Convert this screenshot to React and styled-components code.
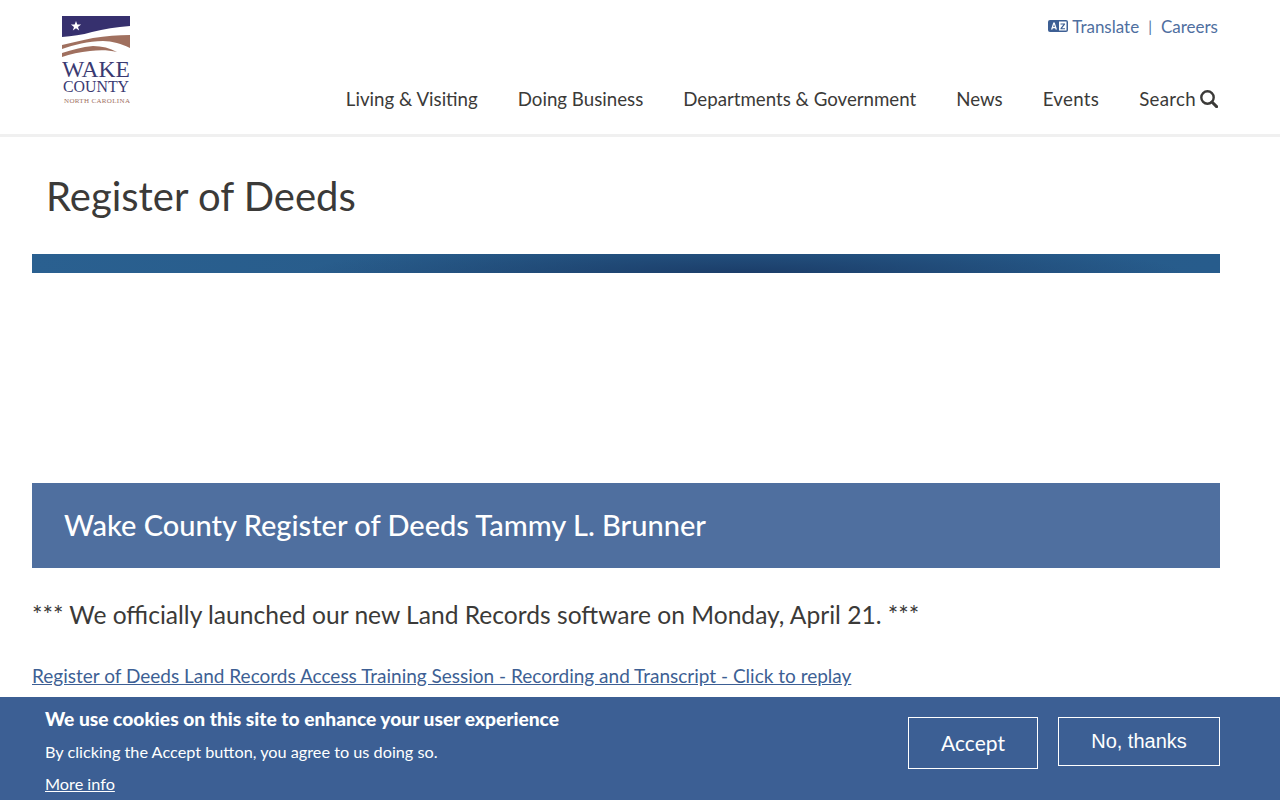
import React from 'react';
import styled, { createGlobalStyle } from 'styled-components';

const GlobalStyle = createGlobalStyle`
	html, body {
		margin: 0;
		padding: 0;
		background: #fff;
		font-family: "Lato", "Noto Sans", sans-serif;
		color: #3b3a38;
	}
`;

const Header = styled.header`
	height: 134px;
	border-bottom: 3px solid #f0f0f0;
	display: flex;
	justify-content: space-between;
	padding: 0 62px;
`;

const LogoLink = styled.a`
	display: block;
	width: 68px;
	height: 88px;
	margin-top: 16px;
`;

const HeaderRight = styled.div`
	display: flex;
	flex-direction: column;
	align-items: flex-end;
`;

const TopLinks = styled.div`
	display: flex;
	align-items: center;
	height: 20px;
	margin-top: 16px;
	font-size: 17px;
	color: #4f6f9f;
`;

const TopLink = styled.a`
	display: flex;
	align-items: center;
	gap: 4px;
	color: #4f6f9f;
	text-decoration: none;
`;

const Separator = styled.span`
	margin: 0 9px;
	font-size: 15px;
`;

const Nav = styled.nav`
	display: flex;
	gap: 40px;
	margin-top: 52px;
	font-size: 18.7px;
	line-height: 22px;
`;

const NavItem = styled.a`
	display: flex;
	align-items: center;
	gap: 4px;
	color: #3b3a38;
	letter-spacing: ${props => props.$track || 0}px;
`;

const Title = styled.h1`
	box-sizing: content-box;
	margin: 0;
	padding: 36px 0 0 46px;
	height: 81px;
	font-size: 40px;
	line-height: 46px;
	font-weight: 400;
	color: #3b3a38;
`;

const Main = styled.main`
	width: 1188px;
	margin-left: 32px;
`;

const Banner = styled.div`
	height: 19px;
	background:
		radial-gradient(ellipse 440px 32px at 60% 100%, #1b3d69 0%, rgba(27, 61, 105, 0) 100%),
		linear-gradient(90deg, #2a6090 0%, #275a88 50%, #275c8c 100%);
`;

const Spacer = styled.div`
	height: 210px;
`;

const Heading = styled.h2`
	margin: 0;
	height: 85px;
	padding: 0 0 2px 32px;
	box-sizing: border-box;
	display: flex;
	align-items: center;
	background: #4f6f9f;
	color: #fff;
	font-size: 29px;
	font-weight: 500;
`;

const Notice = styled.p`
	margin: 33px 0 0;
	font-size: 24.6px;
	line-height: 28px;
	color: #3b3a38;
`;

const TrainingLink = styled.a`
	display: block;
	margin-top: 36px;
	font-size: 19px;
	line-height: 22px;
	color: #3d5f94;
	text-decoration: underline;
`;

const CookieBar = styled.div`
	position: fixed;
	left: 0;
	right: 0;
	bottom: 0;
	height: 103px;
	background: #3c5f94;
	color: #fff;
	display: flex;
	justify-content: space-between;
	padding: 0 60px 0 45px;
`;

const CookieText = styled.div`
	padding-top: 11px;
`;

const CookieTitle = styled.div`
	font-size: 19.2px;
	line-height: 22px;
	font-weight: 900;
`;

const CookieCopy = styled.div`
	margin-top: 12px;
	font-size: 16.25px;
	line-height: 20px;
`;

const MoreInfo = styled.a`
	display: inline-block;
	margin-top: 12px;
	font-size: 16.25px;
	line-height: 20px;
	color: #fff;
	text-decoration: underline;
`;

const CookieActions = styled.div`
	display: flex;
	align-items: flex-start;
	gap: 20px;
	padding-top: 20px;
`;

const CookieButton = styled.button`
	box-sizing: border-box;
	background: transparent;
	border: 1px solid #fff;
	color: #fff;
	cursor: pointer;
	width: ${props => props.$width}px;
	height: ${props => props.$height}px;
	font-family: ${props => props.$arial ? '"Liberation Sans", Arial, sans-serif' : '"Lato", sans-serif'};
	font-size: ${props => props.$arial ? 20 : 21}px;
	padding: 0 0 ${props => props.$arial ? 0 : 2}px;
`;

const Logo = () => (
	<svg width="68" height="88" viewBox="0 0 68 88">
		<path d="M0 0H68V10C54 11 42 13 30 16C20 19 10 20 0 21Z" fill="#36306e" />
		<path d="M14 5l1.3 3.6h3.8l-3.1 2.3 1.2 3.6-3.2-2.2-3.2 2.2 1.2-3.6-3.1-2.3h3.8z" fill="#fff" />
		<path d="M0 29C10 27 20 24 31 22C44 20 56 19 68 19V32C60 28 50 25 41 25C26 25 12 29 0 33Z" fill="#a0705f" />
		<path d="M0 37C10 34 20 31 31 30C40 30 48 32 55 36C46 34 38 34 28 35C18 36 8 38 0 41Z" fill="#a0705f" />
		<text x="34" y="61" textAnchor="middle" fontFamily="Liberation Serif, serif" fontSize="23" fill="#3a3a72" textLength="68" lengthAdjust="spacingAndGlyphs">WAKE</text>
		<text x="34" y="76" textAnchor="middle" fontFamily="Liberation Serif, serif" fontSize="16" fill="#3a3a72" textLength="66" lengthAdjust="spacingAndGlyphs">COUNTY</text>
		<text x="35" y="86.5" textAnchor="middle" fontFamily="Liberation Serif, serif" fontSize="7" fill="#a0705f" textLength="66" lengthAdjust="spacing">NORTH CAROLINA</text>
	</svg>
);

const TranslateIcon = () => (
	<svg width="20" height="12" viewBox="0 0 20 12">
		<rect width="20" height="12" rx="2" fill="#3d5f94" />
		<path d="M3 9.5L5.3 2.5H6.7L9 9.5H7.6L7.2 8.2H4.8L4.4 9.5ZM5.2 7H6.8L6 4.3Z" fill="#fff" />
		<rect x="11" y="1.5" width="7.5" height="9" fill="#fff" />
		<path d="M12.5 3.5H17V4.6L14 8.2H17V9.3H12.5V8.2L15.4 4.6H12.5Z" fill="#3d5f94" />
	</svg>
);

const SearchIcon = () => (
	<svg width="18" height="18" viewBox="0 0 18 18" fill="none" stroke="#3b3a38">
		<circle cx="7.5" cy="7.5" r="6.2" strokeWidth="2.4" />
		<path d="M12 12L16.6 16.6" strokeWidth="3" strokeLinecap="round" />
	</svg>
);

export default function App() {
	return (
		<>
			<GlobalStyle />
			<Header>
				<LogoLink href="#"><Logo /></LogoLink>
				<HeaderRight>
					<TopLinks>
						<TopLink href="#"><TranslateIcon />Translate</TopLink>
						<Separator>|</Separator>
						<TopLink href="#">Careers</TopLink>
					</TopLinks>
					<Nav>
						<NavItem>Living &amp; Visiting</NavItem>
						<NavItem>Doing Business</NavItem>
						<NavItem>Departments &amp; Government</NavItem>
						<NavItem>News</NavItem>
						<NavItem $track={0.3}>Events</NavItem>
						<NavItem $track={0.3}>Search<SearchIcon /></NavItem>
					</Nav>
				</HeaderRight>
			</Header>
			<Title>Register of Deeds</Title>
			<Main>
				<Banner />
				<Spacer />
				<Heading>Wake County Register of Deeds Tammy L. Brunner</Heading>
				<Notice>*** We officially launched our new Land Records software on Monday, April 21. ***</Notice>
				<TrainingLink href="#">Register of Deeds Land Records Access Training Session - Recording and Transcript - Click to replay</TrainingLink>
			</Main>
			<CookieBar>
				<CookieText>
					<CookieTitle>We use cookies on this site to enhance your user experience</CookieTitle>
					<CookieCopy>By clicking the Accept button, you agree to us doing so.</CookieCopy>
					<MoreInfo href="#">More info</MoreInfo>
				</CookieText>
				<CookieActions>
					<CookieButton $width={130} $height={52}>Accept</CookieButton>
					<CookieButton $width={162} $height={49} $arial>No, thanks</CookieButton>
				</CookieActions>
			</CookieBar>
		</>
	);
}
